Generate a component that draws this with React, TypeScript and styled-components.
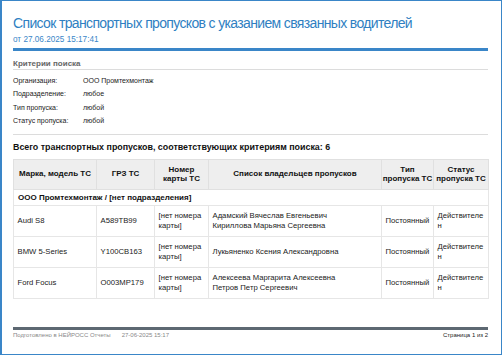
import styled, { createGlobalStyle } from "styled-components";

const GlobalStyle = createGlobalStyle`
  html, body {
    margin: 0;
    padding: 0;
    background: #fff;
  }
  body {
    font-family: "Liberation Sans", Arial, sans-serif;
  }
`;

const Page = styled.div`
  box-sizing: border-box;
  width: 502px;
  height: 355px;
  border: 1px solid #3a86c8;
  border-left-width: 2px;
  padding: 12px 13px 0 11px;
  display: flex;
  flex-direction: column;
  color: #222;
`;

const Title = styled.h1`
  margin: 0;
  font-size: 14px;
  font-weight: normal;
  letter-spacing: -0.65px;
  color: #2f7fc2;
  line-height: 20px;
  white-space: nowrap;
`;

const Subtitle = styled.div`
  margin-top: 2px;
  font-size: 8.2px;
  color: #3a86c8;
  line-height: 10px;
`;

const Rule = styled.div<{ $color: string; $height: number }>`
  height: ${(p) => p.$height}px;
  background: ${(p) => p.$color};
`;

const TitleRule = styled(Rule)`
  margin-top: 3px;
`;

const Criteria = styled.section`
  margin-top: 8px;
  border-bottom: 1px solid #dcdcdc;
  padding-bottom: 6px;
`;

const CriteriaHead = styled.div`
  font-size: 8px;
  font-weight: bold;
  color: #666;
  line-height: 10px;
  border-bottom: 1px solid #dcdcdc;
  margin-bottom: 4px;
`;

const CriteriaRow = styled.div`
  display: grid;
  grid-template-columns: 70px 1fr;
  font-size: 7px;
  line-height: 13.4px;
  color: #222;
`;

const Total = styled.div`
  margin-top: 7px;
  font-size: 8.9px;
  font-weight: bold;
  line-height: 10px;
  color: #111;
`;

const Table = styled.table`
  margin-top: 7px;
  width: 100%;
  border-collapse: collapse;
  table-layout: fixed;
  font-size: 7.7px;
  color: #222;
`;

const Col = styled.col<{ $w: number }>`
  width: ${(p) => p.$w}px;
`;

const Th = styled.th`
  background: #eeeeee;
  border: 1px solid #e0e0e0;
  font-size: 8px;
  font-weight: bold;
  text-align: center;
  height: 29px;
  padding: 0;
  line-height: 9.5px;
  color: #111;
  white-space: pre;
`;

const GroupCell = styled.td`
  font-weight: bold;
  font-size: 8px;
  padding: 0 4px;
  height: 15px;
  border: 1px solid #e6e6e6;
  border-top: none;
  color: #111;
`;

const Td = styled.td`
  border: 1px solid #e6e6e6;
  padding: 0 3px 0 3.5px;
  height: 30px;
  line-height: 10px;
  vertical-align: middle;
  overflow-wrap: anywhere;
`;

const Spacer = styled.div`
  flex: 1;
`;

const Footer = styled.footer`
  margin-bottom: 15px;
`;

const FooterLine = styled.div`
  margin-top: 1px;
  display: flex;
  align-items: center;
  font-size: 6px;
  color: #888;
  line-height: 8px;
`;

const FooterDate = styled.span`
  margin-left: 11px;
`;

const PageNum = styled.span`
  margin-left: auto;
  color: #222;
`;

const criteria = [
  ["Организация:", "ООО Промтехмонтаж"],
  ["Подразделение:", "любое"],
  ["Тип пропуска:", "любой"],
  ["Статус пропуска:", "любой"],
];

const columns: [string, number][] = [
  ["Марка, модель ТС", 83],
  ["ГРЗ ТС", 58],
  ["Номер\nкарты ТС", 54],
  ["Список владельцев пропусков", 173],
  ["Тип\nпропуска ТС", 52],
  ["Статус\nпропуска ТС", 55],
];

const rows = [
  {
    car: "Audi S8",
    plate: "A589TB99",
    owners: ["Адамский Вячеслав Евгеньевич", "Кириллова Марьяна Сергеевна"],
  },
  {
    car: "BMW 5-Series",
    plate: "Y100CB163",
    owners: ["Лукьяненко Ксения Александровна"],
  },
  {
    car: "Ford Focus",
    plate: "O003MP179",
    owners: ["Алексеева Маргарита Алексеевна", "Петров Петр Сергеевич"],
  },
];

const App = () => {
  return (
    <>
      <GlobalStyle />
      <Page>
        <Title>Список транспортных пропусков с указанием связанных водителей</Title>
        <Subtitle>от 27.06.2025 15:17:41</Subtitle>
        <TitleRule $color="#3a86c8" $height={3} />

        <Criteria>
          <CriteriaHead>Критерии поиска</CriteriaHead>
          {criteria.map(([label, value]) => (
            <CriteriaRow key={label}>
              <span>{label}</span>
              <span>{value}</span>
            </CriteriaRow>
          ))}
        </Criteria>

        <Total>Всего транспортных пропусков, соответствующих критериям поиска: 6</Total>

        <Table>
          <colgroup>
            {columns.map(([name, w]) => (
              <Col key={name} $w={w} />
            ))}
          </colgroup>
          <thead>
            <tr>
              {columns.map(([name]) => (
                <Th key={name}>{name}</Th>
              ))}
            </tr>
          </thead>
          <tbody>
            <tr>
              <GroupCell colSpan={6}>ООО Промтехмонтаж / [нет подразделения]</GroupCell>
            </tr>
            {rows.map((row) => (
              <tr key={row.plate}>
                <Td>{row.car}</Td>
                <Td>{row.plate}</Td>
                <Td>[нет номера карты]</Td>
                <Td>
                  {row.owners.map((o) => (
                    <div key={o}>{o}</div>
                  ))}
                </Td>
                <Td>Постоянный</Td>
                <Td>Действителен</Td>
              </tr>
            ))}
          </tbody>
        </Table>

        <Spacer />
        <Footer>
          <Rule $color="#5d6872" $height={3} />
          <FooterLine>
            <span>Подготовлено в НЕЙРОСС Отчеты</span>
            <FooterDate>27-06-2025 15:17</FooterDate>
            <PageNum>Страница 1 из 2</PageNum>
          </FooterLine>
        </Footer>
      </Page>
    </>
  );
};

export default App;
